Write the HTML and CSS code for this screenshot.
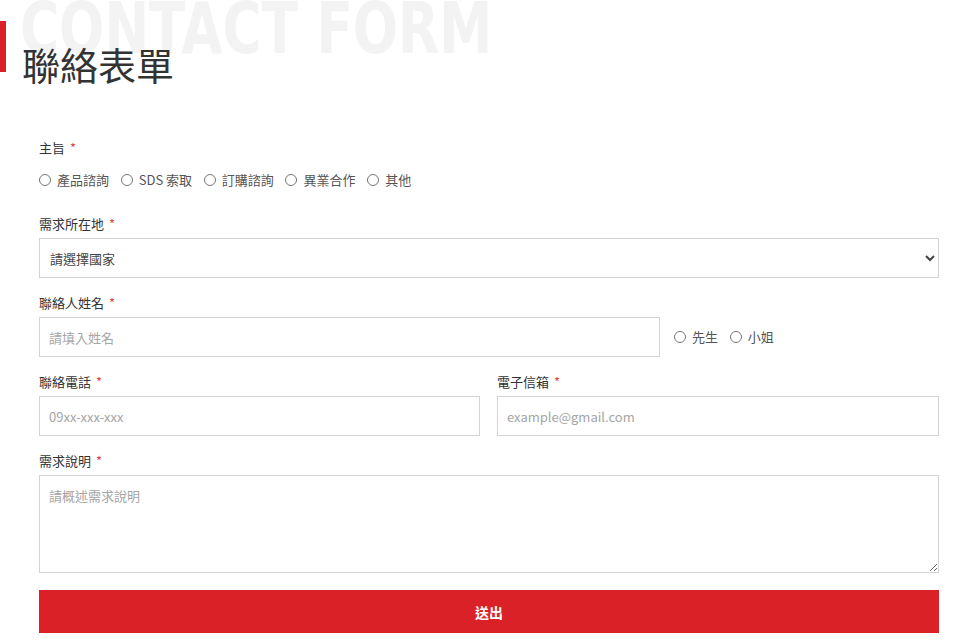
FILE: index.html
```html
<!DOCTYPE html>
<html lang="zh-Hant">
<head>
    <meta charset="UTF-8">
    <meta name="viewport" content="width=device-width, initial-scale=1.0">
    <title>聯絡表單</title>
    <link rel="stylesheet" href="styles.css">
</head>
<body>
    <div class="heading">
        <span class="heading-bg">CONTACT FORM</span>
        <h1>聯絡表單</h1>
    </div>

    <form class="contact-form">
        <div class="field">
            <label class="field-label">主旨 <span class="req">*</span></label>
            <div class="radio-row">
                <label class="radio"><input type="radio" name="subject"> 產品諮詢</label>
                <label class="radio"><input type="radio" name="subject"> SDS 索取</label>
                <label class="radio"><input type="radio" name="subject"> 訂購諮詢</label>
                <label class="radio"><input type="radio" name="subject"> 異業合作</label>
                <label class="radio"><input type="radio" name="subject"> 其他</label>
            </div>
        </div>

        <div class="field">
            <label class="field-label" for="country">需求所在地 <span class="req">*</span></label>
            <select id="country" class="control">
                <option>請選擇國家</option>
            </select>
        </div>

        <div class="field">
            <label class="field-label" for="name">聯絡人姓名 <span class="req">*</span></label>
            <div class="name-row">
                <input id="name" class="control name-input" type="text" placeholder="請填入姓名">
                <div class="radio-row inline">
                    <label class="radio"><input type="radio" name="title"> 先生</label>
                    <label class="radio"><input type="radio" name="title"> 小姐</label>
                </div>
            </div>
        </div>

        <div class="two-col">
            <div class="field">
                <label class="field-label" for="phone">聯絡電話 <span class="req">*</span></label>
                <input id="phone" class="control" type="text" placeholder="09xx-xxx-xxx">
            </div>
            <div class="field">
                <label class="field-label" for="email">電子信箱 <span class="req">*</span></label>
                <input id="email" class="control" type="email" placeholder="example@gmail.com">
            </div>
        </div>

        <div class="field">
            <label class="field-label" for="desc">需求說明 <span class="req">*</span></label>
            <textarea id="desc" class="control textarea" placeholder="請概述需求說明"></textarea>
        </div>

        <button type="submit" class="submit">送出</button>
    </form>
</body>
</html>
```

FILE: styles.css
```css
body {
    margin: 0;
    padding: 0;
    background-color: #fff;
    font-family: "Noto Sans CJK TC", "Noto Sans", sans-serif;
    color: #333;
}
.heading {
    position: relative;
    height: 124px;
    padding-left: 22px;
    overflow: hidden;
}
.heading::before {
    content: "";
    position: absolute;
    left: 0;
    top: 21px;
    width: 6px;
    height: 51px;
    background-color: #da2128;
}
.heading-bg {
    position: absolute;
    left: 20px;
    top: -12px;
    font-family: "DejaVu Sans", "Liberation Sans", sans-serif;
    font-weight: bold;
    font-size: 72px;
    line-height: 80px;
    color: #f3f3f3;
    white-space: nowrap;
    transform: scaleX(0.74);
    transform-origin: left top;
}
.heading h1 {
    position: relative;
    margin: 0;
    padding-top: 40px;
    font-size: 38px;
    line-height: 48px;
    font-weight: 400;
    color: #333;
}
.contact-form {
    width: 900px;
    margin-left: 39px;
    padding-top: 14px;
}
.field {
    margin-bottom: 15px;
}
.field-label {
    display: block;
    font-size: 13px;
    line-height: 20px;
    margin-bottom: 4px;
    color: #333;
}
.req {
    color: #e0454a;
    margin-left: 2px;
}
.radio-row {
    display: flex;
    gap: 11.7px;
    padding: 8px 0 9px;
}
.radio-row.inline {
    padding: 0;
    margin-left: 14px;
    align-items: center;
}
.radio {
    display: flex;
    align-items: center;
    font-size: 13px;
    line-height: 20px;
    color: #555;
}
.radio input {
    width: 12px;
    height: 12px;
    margin: 0 6px 0 0;
}
.control {
    display: block;
    box-sizing: border-box;
    width: 100%;
    height: 40px;
    padding: 0 9px;
    border: 1px solid #d3d3d3;
    border-radius: 0;
    background-color: #fff;
    font-family: inherit;
    font-size: 13px;
    color: #333;
}
select.control {
    padding-left: 6px;
    color: #444;
}
.control::placeholder {
    color: #a5a5a5;
}
.name-row {
    display: flex;
    align-items: center;
}
.name-input {
    width: 621px;
}
.two-col {
    display: grid;
    grid-template-columns: 441px 442px;
    column-gap: 17px;
}
.textarea {
    height: 98px;
    padding: 10px 9px;
    resize: vertical;
}
.submit {
    display: block;
    width: 100%;
    height: 43px;
    margin-top: 17px;
    border: none;
    background-color: #da2128;
    color: #fff;
    font-family: inherit;
    font-size: 14px;
    font-weight: bold;
    cursor: pointer;
}
```
